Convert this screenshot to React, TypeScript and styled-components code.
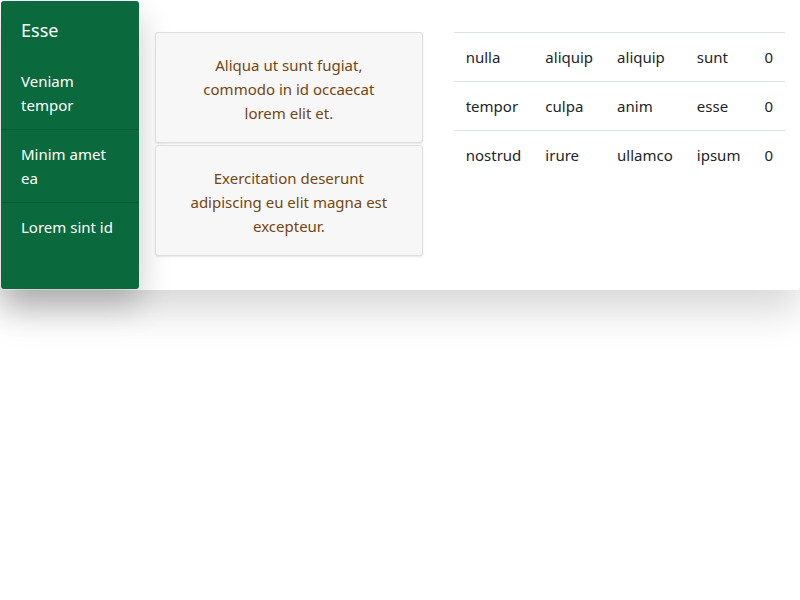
import * as React from 'react';
import styled, { createGlobalStyle } from 'styled-components';

const GlobalStyle = createGlobalStyle`
  body {
    margin: 0;
    background: #fff;
    font-family: "Noto Sans", "Open Sans", sans-serif;
    font-size: 16px;
    line-height: 24px;
    color: #212529;
  }
`;

const Page = styled.div`
  min-height: 600px;
`;

const Shell = styled.div`
  display: flex;
  align-items: flex-start;
  width: 800px;
  height: 290px;
  box-sizing: border-box;
  padding: 1px 15px 0 1px;
  background: #fff;
  border-radius: 0 0 4px 4px;
  box-shadow: 0 20px 40px rgba(0, 0, 0, 0.16);
`;

const Sidebar = styled.nav`
  width: 138px;
  height: 288px;
  flex-shrink: 0;
  background: #0a6a3d;
  color: #fff;
  border-radius: 3px;
  box-shadow: 0 16px 32px rgba(0, 0, 0, 0.22);
`;

const Brand = styled.div`
  padding: 17px 20px 15px;
  font-size: 18px;
  line-height: 24px;
`;

const NavItem = styled.div<{ $last?: boolean }>`
  padding: 12px 20px;
  font-size: 15px;
  line-height: 24px;
  border-bottom: ${p => (p.$last ? 'none' : '1px solid rgba(0, 0, 0, 0.12)')};
`;

const Cards = styled.div`
  display: flex;
  flex-direction: column;
  gap: 2px;
  width: 268px;
  margin: 31px 0 0 16px;
`;

const Card = styled.div`
  box-sizing: border-box;
  height: 111px;
  padding: 20px 30px;
  background: #f7f7f7;
  border: 1px solid #dedede;
  border-radius: 3px;
  box-shadow: 0 1px 2px rgba(0, 0, 0, 0.1);
  color: #74460f;
  font-size: 15px;
  text-align: center;
`;

const Table = styled.table`
  margin: 31px 0 0 31px;
  flex: 1;
  border-collapse: collapse;
  font-size: 15px;
`;

const Cell = styled.td`
  padding: 12px;
  line-height: 24px;
  border-top: 1px solid #dee2e6;
  white-space: nowrap;
`;

const rows = [
  ['nulla', 'aliquip', 'aliquip', 'sunt', '0'],
  ['tempor', 'culpa', 'anim', 'esse', '0'],
  ['nostrud', 'irure', 'ullamco', 'ipsum', '0'],
];

const navItems = ['Veniam tempor', 'Minim amet ea', 'Lorem sint id'];

export default function App() {
  return (
    <Page>
      <GlobalStyle />
      <Shell>
        <Sidebar>
          <Brand>Esse</Brand>
          {navItems.map((item, i) => (
            <NavItem key={item} $last={i === navItems.length - 1}>
              {item}
            </NavItem>
          ))}
        </Sidebar>
        <Cards>
          <Card>Aliqua ut sunt fugiat, commodo in id occaecat lorem elit et.</Card>
          <Card>Exercitation deserunt adipiscing eu elit magna est excepteur.</Card>
        </Cards>
        <Table>
          <tbody>
            {rows.map((row, i) => (
              <tr key={i}>
                {row.map((c, j) => (
                  <Cell key={j}>{c}</Cell>
                ))}
              </tr>
            ))}
          </tbody>
        </Table>
      </Shell>
    </Page>
  );
}
